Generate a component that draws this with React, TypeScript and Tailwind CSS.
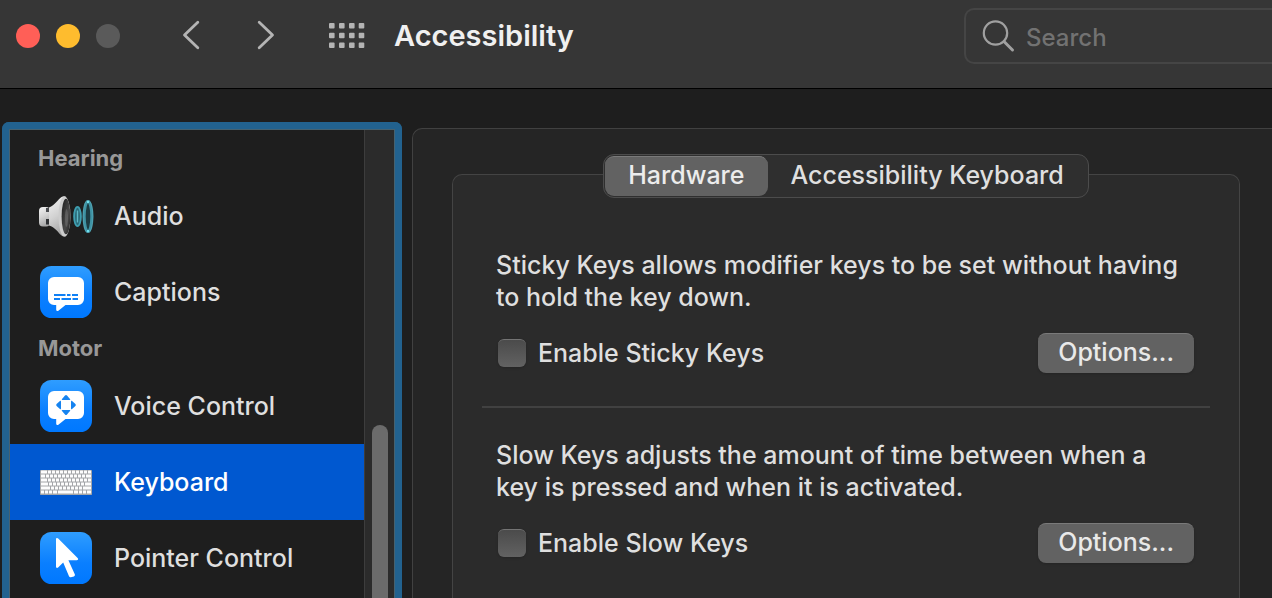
import { useState, type ReactNode } from "react";

function AudioIcon() {
  return (
    <svg viewBox="0 0 56 44" className="h-11 w-14" aria-hidden="true">
      <defs>
        <linearGradient id="cone" x1="0" y1="0" x2="0.3" y2="1">
          <stop offset="0" stopColor="#f4f4f4" />
          <stop offset="0.55" stopColor="#d2d2d2" />
          <stop offset="1" stopColor="#a9a9a9" />
        </linearGradient>
        <linearGradient id="mouth" x1="0" y1="0" x2="1" y2="1">
          <stop offset="0" stopColor="#1b1b1b" />
          <stop offset="0.6" stopColor="#4a4a4a" />
          <stop offset="1" stopColor="#222222" />
        </linearGradient>
      </defs>
      <rect x="1" y="13" width="11" height="19.500" rx="4" fill="url(#cone)" />
      <rect x="8" y="14" width="4" height="4" fill="#4a4c50" />
      <rect x="8" y="25" width="4" height="5.500" fill="#2f3134" />
      <path d="M11 13.500C17 11 20 5.500 23.500 3c1.600-1 3.600-1 4.500 0l0 39c-1.300 1-3.300.6-4.800-.8C19.500 38 17 33 11 31.500z" fill="url(#cone)" />
      <ellipse cx="26.500" cy="22.500" rx="6" ry="20" fill="#cdcdcd" />
      <ellipse cx="28" cy="22.500" rx="4.400" ry="17.800" fill="url(#mouth)" />
      <ellipse cx="28.500" cy="24" rx="1.600" ry="9" fill="#777777" opacity="0.5" />
      <ellipse cx="39.500" cy="22.500" rx="3.400" ry="9.600" fill="#2b6a78" stroke="#3f9fb1" strokeWidth="1.800" />
      <path d="M39.500 16.500v12" stroke="#5cb8c6" strokeWidth="1.400" />
      <ellipse cx="50" cy="22.500" rx="3.800" ry="15" fill="#1c3b42" stroke="#3f93a4" strokeWidth="3" />
      <ellipse cx="50" cy="22.500" rx="5" ry="16.300" fill="none" stroke="#64b4c2" strokeWidth="0.500" />
      <path d="M49 8h2M49 37h2" stroke="#6fe0ee" strokeWidth="2" />
    </svg>
  );
}

function BlueTile({ id, children }: { id: string; children: ReactNode }) {
  return (
    <svg viewBox="0 0 52 52" className="size-[52px]" aria-hidden="true">
      <defs>
        <linearGradient id={id} x1="0" y1="0" x2="0" y2="1">
          <stop offset="0" stopColor="#2f9dff" />
          <stop offset="0.6" stopColor="#0a7fff" />
          <stop offset="1" stopColor="#0078ff" />
        </linearGradient>
      </defs>
      <rect width="52" height="52" rx="11.500" fill={`url(#${id})`} />
      {children}
    </svg>
  );
}

const bubble =
  "M14 11h24a6 6 0 0 1 6 6v16a6 6 0 0 1-6 6H25.500l-6.800 5.600c-1.300 1-2.500.5-2.500-1V39H14a6 6 0 0 1-6-6V17a6 6 0 0 1 6-6z";

function CaptionsIcon() {
  return (
    <BlueTile id="tile-captions">
      <path d={bubble} fill="#fff" />
      <path d="M14 29h11.500M27 29h3.500M32 29h6M14 33h6M21.500 33h9.500M32.500 33h5.500" stroke="#0f80f5" strokeWidth="2" />
    </BlueTile>
  );
}

function VoiceIcon() {
  return (
    <BlueTile id="tile-voice">
      <path d={bubble} fill="#fff" />
      <g fill="#1583f0">
        <path d="M25 15.600q1-1 2 0l3.200 3.600q.3.800-.6.800h-7.200q-.9 0-.6-.8z" />
        <path d="M25 34.400q1 1 2 0l3.200-3.600q.3-.8-.6-.8h-7.200q-.9 0-.6.8z" />
        <path d="M16.600 24q-1 1 0 2l3.600 3.200q.8.300.8-.6v-7.200q0-.9-.8-.6z" />
        <path d="M35.400 24q1 1 0 2l-3.600 3.200q-.8.300-.8-.6v-7.200q0-.9.800-.6z" />
      </g>
    </BlueTile>
  );
}

function PointerIcon() {
  return (
    <BlueTile id="tile-pointer">
      <path
        d="M16 7.300c0-1.400 1.300-1.700 2.200-.8L37.600 26c1.100 1.200.5 2.300-1 2.300h-8.200l6.400 14c.4 1-.1 1.800-.9 2.100l-3 .8c-.8.200-1.500-.1-1.900-1L23.200 30.400l-5.100 5c-1 .9-2.100.5-2.100-.8z"
        fill="#fff"
      />
    </BlueTile>
  );
}

const keyRows = [
  [1, 8, 12, 16, 20, 24, 28, 32, 36, 40, 44, 48],
  [1, 6, 10, 14, 18, 22, 26, 30, 34, 38, 42, 46],
  [1, 8, 12, 16, 20, 24, 28, 32, 36, 40, 44, 48],
  [1, 9, 13, 17, 21, 25, 29, 33, 37, 41, 45],
  [1, 11, 15, 19, 23, 27, 31, 35, 39, 43],
  [1, 5, 9, 13, 18, 34, 39, 43, 47],
];

function KeyboardIcon() {
  return (
    <svg viewBox="0 0 52 26" className="h-[26px] w-[52px]" aria-hidden="true">
      <rect y="1" width="52" height="25" rx="0.800" fill="#a4a6a9" />
      {keyRows.map((row, r) =>
        row.map((x, i) => (
          <rect
            key={`${r}-${x}`}
            x={x}
            y={1.500 + r * 4}
            width={(row[i + 1] ?? 52) - x - 1}
            height="3.100"
            rx="0.300"
            fill="#fdfdfd"
          />
        )),
      )}
    </svg>
  );
}

const groups = [
  {
    title: "Hearing",
    items: [
      { name: "Audio", icon: <AudioIcon /> },
      { name: "Captions", icon: <CaptionsIcon /> },
    ],
  },
  {
    title: "Motor",
    items: [
      { name: "Voice Control", icon: <VoiceIcon /> },
      { name: "Keyboard", icon: <KeyboardIcon /> },
      { name: "Pointer Control", icon: <PointerIcon /> },
    ],
  },
];

function TitleBar() {
  return (
    <header className="flex h-[89px] shrink-0 items-start border-b border-black bg-[#363636]">
      <div className="flex h-[72px] items-center pl-4">
        <div className="flex gap-4">
          <button aria-label="Close" className="size-6 rounded-full bg-[#ff5f57]" />
          <button aria-label="Minimize" className="size-6 rounded-full bg-[#febc2e]" />
          <button aria-label="Zoom" disabled className="size-6 rounded-full bg-[#5a5a5a]" />
        </div>
        <button aria-label="Back" className="ml-15">
          <svg viewBox="0 0 24 32" className="h-8 w-6" fill="none" stroke="#b4b4b4" strokeWidth="2.800" strokeLinecap="round" strokeLinejoin="round">
            <path d="M17.800 2.300L4.500 15L17.800 27.700" />
          </svg>
        </button>
        <button aria-label="Forward" className="ml-12">
          <svg viewBox="0 0 24 32" className="h-8 w-6" fill="none" stroke="#b4b4b4" strokeWidth="2.800" strokeLinecap="round" strokeLinejoin="round">
            <path d="M7.200 2.300L20.500 15L7.200 27.700" />
          </svg>
        </button>
        <button aria-label="Show All" className="ml-[53px]">
          <svg viewBox="0 0 36 26" className="h-[26px] w-9" fill="#b4b4b4">
            {[0, 10, 20, 29.700].map((x) => [0, 9.700, 19.500].map((y) => <rect key={`${x}-${y}`} x={x} y={y} width="5.600" height="5.600" rx="1" />))}
          </svg>
        </button>
        <h1 className="ml-[29px] text-[29px] leading-9 font-semibold text-[#f0f0f0]">Accessibility</h1>
      </div>
      <div className="mt-2 ml-auto flex h-14 w-[308px] items-center rounded-l-[10px] border-2 border-r-0 border-[#454545] pl-4">
        <svg viewBox="0 0 34 34" className="size-[34px] shrink-0" fill="none" stroke="#a0a0a0" strokeLinecap="round" aria-hidden="true">
          <circle cx="13.500" cy="14" r="11.700" strokeWidth="2.200" />
          <path d="M22 22.500l8.500 8.500" strokeWidth="3" />
        </svg>
        <input
          type="search"
          aria-label="Search"
          placeholder="Search"
          className="ml-[10px] h-10 min-w-0 flex-1 bg-transparent pt-[2px] text-[24px] text-[#dfdfdf] outline-none placeholder:text-[#727272]"
        />
      </div>
    </header>
  );
}

function Sidebar({ current, onSelect }: { current: string; onSelect: (name: string) => void }) {
  return (
    <aside className="-mt-[6px] flex w-[400px] shrink-0 overflow-hidden rounded-t-[7px] border-[7px] border-b-0 border-[#22628f]">
      <div className="flex w-full border border-b-0 border-[#466270]">
        <nav aria-label="Accessibility features" className="min-w-0 flex-1 pt-[10px]">
          {groups.map((group) => (
            <section key={group.title}>
              <h2 className="flex h-[38px] items-center pb-[2px] pl-7 text-[22px] leading-7 font-bold text-[#989898]">{group.title}</h2>
              {group.items.map((item) => (
                <button
                  key={item.name}
                  aria-current={item.name === current ? "page" : undefined}
                  onClick={() => onSelect(item.name)}
                  className={`flex h-19 w-full items-center gap-5 pl-7 text-left text-[25px] leading-8 ${item.name === current ? "bg-[#0058d0] text-white" : "text-[#dfdfdf]"}`}
                >
                  <span className="flex w-14 shrink-0 justify-center">{item.icon}</span>
                  {item.name}
                </button>
              ))}
            </section>
          ))}
        </nav>
        <div className="flex w-[30px] shrink-0 border-l border-[#3d3d3d] bg-[#2b2b2b] pt-[295px] pl-[7px]">
          <div className="w-4 rounded-t-full bg-[#6b6b6b]" />
        </div>
      </div>
    </aside>
  );
}

const tabs = ["Hardware", "Accessibility Keyboard"];

function Option({ text, label }: { text: string; label: string }) {
  return (
    <section className="pr-4 pl-[14px]">
      <p className="pr-2">{text}</p>
      <div className="mt-5 flex items-center justify-between">
        <label className="flex items-center gap-3 pl-[2px]">
          <input
            type="checkbox"
            className="size-7 appearance-none rounded-md border-t border-[#747474] bg-linear-to-b from-[#4b4b4b] to-[#626262] shadow-sm checked:from-[#0a6cf0] checked:to-[#0058d0]"
          />
          {label}
        </label>
        <button className="h-10 rounded-lg border-t border-[#7a7a7a] bg-[#626262] px-5 pb-1 text-[#e9e9e9] shadow-sm">Options...</button>
      </div>
    </section>
  );
}

export default function App() {
  const [current, setCurrent] = useState("Keyboard");
  const [tab, setTab] = useState(tabs[0]);
  return (
    <div className="flex h-screen flex-col overflow-hidden bg-[#1e1e1e] font-['Inter',sans-serif] text-[25px] leading-8 font-medium text-[#dfdfdf]">
      <TitleBar />
      <div className="flex min-h-0 flex-1 gap-[10px] pt-[39px] pl-[2px]">
        <Sidebar current={current} onSelect={setCurrent} />
        <main className="flex min-w-0 flex-1 flex-col rounded-tl-[10px] border-t border-l border-[#414141] bg-[#252525] pt-[25px] pr-8 pl-[39px]">
          <div role="tablist" className="z-10 flex h-11 self-center rounded-[11px] border border-[#4c4c4c] bg-[#2f2f2f] p-px">
            {tabs.map((name) => (
              <button
                key={name}
                role="tab"
                aria-selected={name === tab}
                onClick={() => setTab(name)}
                className={`rounded-[9px] border-t px-[23px] pb-[3px] ${name === tab ? "border-[#7a7a7a] bg-[#626262] text-[#ececec]" : "border-transparent"}`}
              >
                {name}
              </button>
            ))}
          </div>
          <div role="tabpanel" className="-mt-6 flex-1 rounded-t-[10px] border border-b-0 border-[#444444] bg-[#2b2b2b] px-[29px] pt-[74px]">
            <Option text="Sticky Keys allows modifier keys to be set without having to hold the key down." label="Enable Sticky Keys" />
            <hr className="mt-[33px] mb-[31px] border-t-2 border-[#414141]" />
            <Option text="Slow Keys adjusts the amount of time between when a key is pressed and when it is activated." label="Enable Slow Keys" />
          </div>
        </main>
      </div>
    </div>
  );
}
